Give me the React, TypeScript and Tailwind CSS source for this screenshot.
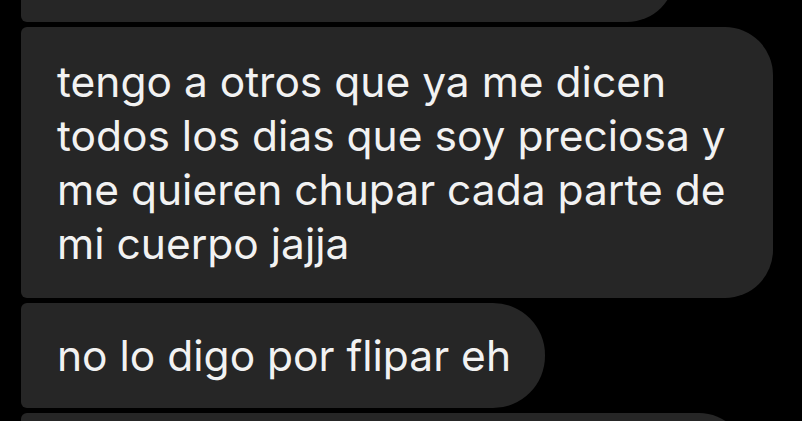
import React from "react";

export default function App() {
  return (
    <div
      className="w-[802px] h-[421px] overflow-hidden bg-black text-[#f2f2f2]"
      style={{ fontFamily: "Inter, Roboto, sans-serif" }}
    >
      <div className="flex flex-col items-start gap-[5px] pl-[21px]">
        <div className="mt-[-78px] h-[100px] w-[654px] rounded-tl-[6px] rounded-bl-[6px] rounded-r-[48px] bg-[#262626]" />
        <div className="w-[752px] rounded-l-[6px] rounded-r-[48px] bg-[#262626] pl-[36px] pr-[10px] pt-[28px] pb-[27px] text-[42.5px] leading-[54px] whitespace-nowrap">
          <div>tengo a otros que ya me dicen</div>
          <div>todos los dias que soy preciosa y</div>
          <div>me quieren chupar cada parte de</div>
          <div>mi cuerpo jajja</div>
        </div>
        <div className="h-[105px] w-[524px] flex items-center rounded-l-[6px] rounded-r-[52px] bg-[#262626] pl-[36px] text-[42.5px] leading-[54px] whitespace-nowrap">
          no lo digo por flipar eh
        </div>
        <div className="h-[100px] w-[726px] rounded-l-[6px] rounded-r-[48px] bg-[#262626]" />
      </div>
    </div>
  );
}
